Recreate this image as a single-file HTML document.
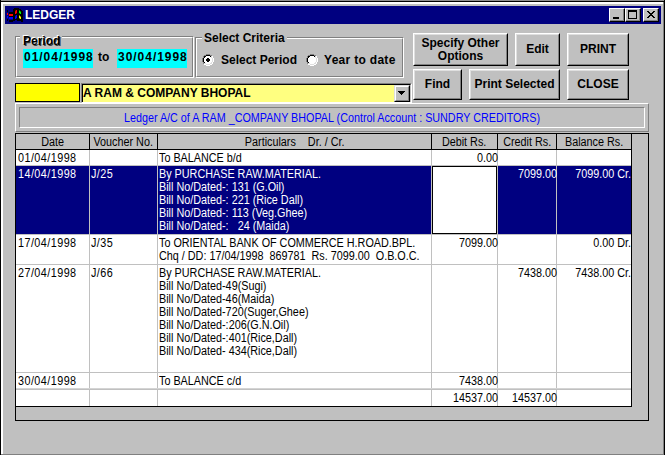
<!DOCTYPE html>
<html><head><meta charset="utf-8">
<style>
*{margin:0;padding:0;box-sizing:border-box}
html,body{width:665px;height:455px;overflow:hidden;background:#c0c0c0;font-family:"Liberation Sans",sans-serif;position:relative}
.a{position:absolute}
.hl{position:absolute;height:1px}
.vl{position:absolute;width:1px}
.btn{position:absolute;background:#c0c0c0;border-top:1px solid #fff;border-left:1px solid #fff;border-right:1px solid #000;border-bottom:1px solid #000;font-weight:bold;font-size:12px;color:#000;text-align:center;display:flex;align-items:center;justify-content:center;line-height:13px}
.btn::after{content:"";position:absolute;left:0;top:0;right:0;bottom:0;border-top:1px solid #dfdfdf;border-left:1px solid #dfdfdf;border-right:1px solid #808080;border-bottom:1px solid #808080}
.tb{position:absolute;top:8px;width:16px;height:14px;background:#c0c0c0;border-top:1px solid #fff;border-left:1px solid #fff;border-right:1px solid #000;border-bottom:1px solid #000}
.tb::after{content:"";position:absolute;left:0;top:0;right:0;bottom:0;border-right:1px solid #808080;border-bottom:1px solid #808080}
.grp{position:absolute;border-top:1px solid #808080;border-left:1px solid #808080;border-right:1px solid #fff;border-bottom:1px solid #fff}
.grp::after{content:"";position:absolute;left:0;top:0;right:0;bottom:0;border-top:1px solid #fff;border-left:1px solid #fff;border-right:1px solid #808080;border-bottom:1px solid #808080}
.lbl{position:absolute;font-weight:bold;font-size:12px;line-height:14px;white-space:nowrap;background:#c0c0c0;padding:0 2px}
.t11{font-size:11px;line-height:13px;white-space:nowrap}
.cell{position:absolute;font-size:12px;line-height:13px;white-space:pre;color:#000;transform:scaleX(0.9)}
.r{text-align:right}
.sel{color:#fff}
.radio{position:absolute;width:12px;height:12px}
</style></head><body>
<!-- window frame -->
<div class="hl" style="left:0;top:0;width:665px;background:#8e8e8e"></div>
<div class="hl" style="left:0;top:1px;width:665px;background:#000"></div>
<div class="vl" style="left:0;top:0;height:455px;background:#000"></div>
<div class="a" style="left:1px;top:2px;width:662px;height:2px;background:#fff"></div>
<div class="a" style="left:1px;top:2px;width:2px;height:453px;background:#fff"></div>
<div class="a" style="left:663px;top:2px;width:1px;height:453px;background:#808080"></div>
<div class="a" style="left:664px;top:0;width:1px;height:455px;background:#000"></div>
<div class="hl" style="left:1px;top:454px;width:663px;background:#808080"></div>

<!-- title bar -->
<div class="a" style="left:5px;top:6px;width:656px;height:18px;background:#000080"></div>
<svg class="a" style="left:6px;top:7px" width="17" height="16" viewBox="0 0 17 16">
<path fill="#000" d="M3 5h4v-3h1v-1h5v1h2v1h1v1h1v11h-2v-1h-4v-1h-2v1h-2v1h-4z"/>
<rect x="1" y="3" width="1" height="2" fill="#000"/>
<rect x="1" y="6" width="1" height="2" fill="#f00"/>
<rect x="1" y="9" width="1" height="2" fill="#00f"/>
<rect x="1" y="12" width="1" height="2" fill="#000"/>
<rect x="3" y="7" width="4" height="2" fill="#f00"/>
<rect x="3" y="10" width="4" height="2.5" fill="#00f"/>
<polygon points="10,3 11,3 11,5.5 10,7 9,7 9,4.5" fill="#f00"/>
<polygon points="13,3 14,4 15,5 15,7 14,7 13,5.5" fill="#0f0"/>
<polygon points="10,8 11,8 11,10.5 10,12 9,12 9,9.5" fill="#00f"/>
<polygon points="13,8 14,9 15,10 15,12 14,12 13,10.5" fill="#ff0"/>
</svg>
<div class="a" style="left:25px;top:8px;font-weight:bold;font-size:12px;line-height:14px;color:#fff;letter-spacing:0px">LEDGER</div>
<div class="tb" style="left:609px"><div class="a" style="left:3px;top:8px;width:6px;height:2px;background:#000"></div></div>
<div class="tb" style="left:625px"><div class="a" style="left:2px;top:1px;width:9px;height:9px;border:1px solid #000;border-top-width:2px"></div></div>
<div class="tb" style="left:643px"><svg class="a" style="left:3px;top:2px" width="8" height="7" viewBox="0 0 8 7" shape-rendering="crispEdges"><path fill="#000" d="M0 0h2v1h1v1h2v-1h1v-1h2v1h-1v1h-1v1h-1v1h1v1h1v1h1v1h-2v-1h-1v-1h-2v1h-1v1h-2v-1h1v-1h1v-1h1v-1h-1v-1h-1v-1h-1z"/></svg></div>

<!-- Period group -->
<div class="grp" style="left:15px;top:36px;width:179px;height:42px"></div>
<div class="lbl" style="left:20px;padding-left:3px;top:34px;text-shadow:-1px -1px 0 #fff,1px 1px 0 #404040">Period</div>
<div class="a" style="left:23px;top:49px;width:70px;height:19px;background:#00ffff"></div>
<div class="a" style="left:117px;top:49px;width:70px;height:19px;background:#00ffff"></div>
<div class="a" style="left:24px;top:50px;font-weight:bold;font-size:12px;line-height:14px;letter-spacing:0.97px">01/04/1998</div>
<div class="a" style="left:98px;top:50px;font-weight:bold;font-size:12px;line-height:14px">to</div>
<div class="a" style="left:118px;top:50px;font-weight:bold;font-size:12px;line-height:14px;letter-spacing:0.97px">30/04/1998</div>

<!-- Select Criteria group -->
<div class="grp" style="left:195px;top:37px;width:209px;height:41px"></div>
<div class="lbl" style="left:202px;top:31px">Select Criteria</div>
<svg class="radio" style="left:202px;top:54px" width="12" height="12" viewBox="0 0 12 12" shape-rendering="crispEdges"><path fill="#808080" d="M4 0h1v1h-1zM5 0h1v1h-1zM6 0h1v1h-1zM7 0h1v1h-1zM2 1h1v1h-1zM3 1h1v1h-1zM8 1h1v1h-1zM9 1h1v1h-1zM1 2h1v1h-1zM1 3h1v1h-1zM0 4h1v1h-1zM0 5h1v1h-1zM0 6h1v1h-1zM0 7h1v1h-1zM1 8h1v1h-1zM1 9h1v1h-1z"/><path fill="#fff" d="M10 2h1v1h-1zM10 3h1v1h-1zM11 4h1v1h-1zM11 5h1v1h-1zM11 6h1v1h-1zM11 7h1v1h-1zM10 8h1v1h-1zM10 9h1v1h-1zM2 10h1v1h-1zM3 10h1v1h-1zM8 10h1v1h-1zM9 10h1v1h-1zM4 11h1v1h-1zM5 11h1v1h-1zM6 11h1v1h-1zM7 11h1v1h-1zM4 2h1v1h-1zM5 2h1v1h-1zM6 2h1v1h-1zM7 2h1v1h-1zM3 3h1v1h-1zM4 3h1v1h-1zM5 3h1v1h-1zM6 3h1v1h-1zM7 3h1v1h-1zM8 3h1v1h-1zM2 4h1v1h-1zM3 4h1v1h-1zM4 4h1v1h-1zM5 4h1v1h-1zM6 4h1v1h-1zM7 4h1v1h-1zM8 4h1v1h-1zM9 4h1v1h-1zM2 5h1v1h-1zM3 5h1v1h-1zM4 5h1v1h-1zM5 5h1v1h-1zM6 5h1v1h-1zM7 5h1v1h-1zM8 5h1v1h-1zM9 5h1v1h-1zM2 6h1v1h-1zM3 6h1v1h-1zM4 6h1v1h-1zM5 6h1v1h-1zM6 6h1v1h-1zM7 6h1v1h-1zM8 6h1v1h-1zM9 6h1v1h-1zM2 7h1v1h-1zM3 7h1v1h-1zM4 7h1v1h-1zM5 7h1v1h-1zM6 7h1v1h-1zM7 7h1v1h-1zM8 7h1v1h-1zM9 7h1v1h-1zM3 8h1v1h-1zM4 8h1v1h-1zM5 8h1v1h-1zM6 8h1v1h-1zM7 8h1v1h-1zM8 8h1v1h-1zM4 9h1v1h-1zM5 9h1v1h-1zM6 9h1v1h-1zM7 9h1v1h-1z"/><path fill="#dfdfdf" d="M9 2h1v1h-1zM9 3h1v1h-1zM10 4h1v1h-1zM10 5h1v1h-1zM10 6h1v1h-1zM10 7h1v1h-1zM9 8h1v1h-1zM2 9h1v1h-1zM3 9h1v1h-1zM8 9h1v1h-1zM9 9h1v1h-1zM4 10h1v1h-1zM5 10h1v1h-1zM6 10h1v1h-1zM7 10h1v1h-1z"/><path fill="#000" d="M4 1h1v1h-1zM5 1h1v1h-1zM6 1h1v1h-1zM7 1h1v1h-1zM2 2h1v1h-1zM3 2h1v1h-1zM8 2h1v1h-1zM2 3h1v1h-1zM1 4h1v1h-1zM1 5h1v1h-1zM1 6h1v1h-1zM1 7h1v1h-1zM2 8h1v1h-1zM5 4h1v1h-1zM6 4h1v1h-1zM4 5h1v1h-1zM5 5h1v1h-1zM6 5h1v1h-1zM7 5h1v1h-1zM4 6h1v1h-1zM5 6h1v1h-1zM6 6h1v1h-1zM7 6h1v1h-1zM5 7h1v1h-1zM6 7h1v1h-1z"/></svg>
<div class="a" style="left:221px;top:53px;font-weight:bold;font-size:12px;line-height:14px">Select Period</div>
<svg class="radio" style="left:306px;top:54px" width="12" height="12" viewBox="0 0 12 12" shape-rendering="crispEdges"><path fill="#808080" d="M4 0h1v1h-1zM5 0h1v1h-1zM6 0h1v1h-1zM7 0h1v1h-1zM2 1h1v1h-1zM3 1h1v1h-1zM8 1h1v1h-1zM9 1h1v1h-1zM1 2h1v1h-1zM1 3h1v1h-1zM0 4h1v1h-1zM0 5h1v1h-1zM0 6h1v1h-1zM0 7h1v1h-1zM1 8h1v1h-1zM1 9h1v1h-1z"/><path fill="#fff" d="M10 2h1v1h-1zM10 3h1v1h-1zM11 4h1v1h-1zM11 5h1v1h-1zM11 6h1v1h-1zM11 7h1v1h-1zM10 8h1v1h-1zM10 9h1v1h-1zM2 10h1v1h-1zM3 10h1v1h-1zM8 10h1v1h-1zM9 10h1v1h-1zM4 11h1v1h-1zM5 11h1v1h-1zM6 11h1v1h-1zM7 11h1v1h-1zM4 2h1v1h-1zM5 2h1v1h-1zM6 2h1v1h-1zM7 2h1v1h-1zM3 3h1v1h-1zM4 3h1v1h-1zM5 3h1v1h-1zM6 3h1v1h-1zM7 3h1v1h-1zM8 3h1v1h-1zM2 4h1v1h-1zM3 4h1v1h-1zM4 4h1v1h-1zM5 4h1v1h-1zM6 4h1v1h-1zM7 4h1v1h-1zM8 4h1v1h-1zM9 4h1v1h-1zM2 5h1v1h-1zM3 5h1v1h-1zM4 5h1v1h-1zM5 5h1v1h-1zM6 5h1v1h-1zM7 5h1v1h-1zM8 5h1v1h-1zM9 5h1v1h-1zM2 6h1v1h-1zM3 6h1v1h-1zM4 6h1v1h-1zM5 6h1v1h-1zM6 6h1v1h-1zM7 6h1v1h-1zM8 6h1v1h-1zM9 6h1v1h-1zM2 7h1v1h-1zM3 7h1v1h-1zM4 7h1v1h-1zM5 7h1v1h-1zM6 7h1v1h-1zM7 7h1v1h-1zM8 7h1v1h-1zM9 7h1v1h-1zM3 8h1v1h-1zM4 8h1v1h-1zM5 8h1v1h-1zM6 8h1v1h-1zM7 8h1v1h-1zM8 8h1v1h-1zM4 9h1v1h-1zM5 9h1v1h-1zM6 9h1v1h-1zM7 9h1v1h-1z"/><path fill="#dfdfdf" d="M9 2h1v1h-1zM9 3h1v1h-1zM10 4h1v1h-1zM10 5h1v1h-1zM10 6h1v1h-1zM10 7h1v1h-1zM9 8h1v1h-1zM2 9h1v1h-1zM3 9h1v1h-1zM8 9h1v1h-1zM9 9h1v1h-1zM4 10h1v1h-1zM5 10h1v1h-1zM6 10h1v1h-1zM7 10h1v1h-1z"/><path fill="#000" d="M4 1h1v1h-1zM5 1h1v1h-1zM6 1h1v1h-1zM7 1h1v1h-1zM2 2h1v1h-1zM3 2h1v1h-1zM8 2h1v1h-1zM2 3h1v1h-1zM1 4h1v1h-1zM1 5h1v1h-1zM1 6h1v1h-1zM1 7h1v1h-1zM2 8h1v1h-1z"/></svg>
<div class="a" style="left:324px;top:53px;letter-spacing:0.3px;font-weight:bold;font-size:12px;line-height:14px">Year to date</div>

<!-- Buttons -->
<div class="btn" style="left:413px;top:33px;width:95px;height:33px">Specify Other<br>Options</div>
<div class="btn" style="left:515px;top:33px;width:45px;height:33px">Edit</div>
<div class="btn" style="left:567px;top:33px;width:62px;height:33px">PRINT</div>
<div class="btn" style="left:413px;top:69px;width:49px;height:31px">Find</div>
<div class="btn" style="left:469px;top:69px;width:91px;height:31px">Print Selected</div>
<div class="btn" style="left:567px;top:69px;width:62px;height:31px">CLOSE</div>

<!-- yellow box + combo -->
<div class="a" style="left:15px;top:83px;width:65px;height:19px;background:#ffff00;border:1px solid #000"></div>
<div class="a" style="left:81px;top:83px;width:331px;height:20px;background:#ffff80;border-top:1px solid #808080;border-left:1px solid #808080;border-right:1px solid #fff;border-bottom:1px solid #fff">
  <div class="a" style="left:0;top:0;right:0;bottom:0;border-top:1px solid #000;border-left:1px solid #000;border-right:1px solid #c0c0c0"></div>
  <div class="a" style="left:1px;top:2px;font-weight:bold;font-size:12px;line-height:14px">A RAM &amp; COMPANY BHOPAL</div>
  <div class="a" style="left:312px;top:1px;width:16px;height:17px;background:#c0c0c0;border-top:1px solid #dfdfdf;border-left:1px solid #dfdfdf;border-right:1px solid #000;border-bottom:1px solid #000">
    <div class="a" style="left:0;top:0;right:0;bottom:0;border-top:1px solid #fff;border-left:1px solid #fff;border-right:1px solid #808080;border-bottom:1px solid #808080"></div>
    <svg class="a" style="left:3px;top:5px" width="7" height="4" viewBox="0 0 7 4" shape-rendering="crispEdges"><path fill="#000" d="M0 0h7v1h-1v1h-1v1h-1v1h-1v-1h-1v-1h-1v-1h-1z"/></svg>
  </div>
</div>

<!-- Ledger panel -->
<div class="a" style="left:15px;top:103px;width:634px;height:29px;border-top:1px solid #fff;border-left:1px solid #fff;border-right:1px solid #808080;border-bottom:1px solid #808080"></div>
<div class="a" style="left:19px;top:107px;width:626px;height:21px;border-top:1px solid #808080;border-left:1px solid #808080;border-right:1px solid #fff;border-bottom:1px solid #fff"></div>
<div class="a" style="left:19px;top:112px;width:626px;text-align:center;color:#0000ff;font-size:12px;line-height:13px;white-space:nowrap;transform:scaleX(0.897);transform-origin:50% 0">Ledger A/C of A RAM _COMPANY BHOPAL (Control Account : SUNDRY CREDITORS)</div>

<!-- Grid -->
<div class="a" style="left:15px;top:133px;width:634px;height:288px;border:1px solid #000;background:#c0c0c0"></div>
<div id="gridwrap">
<div class="a" style="left:16px;top:149px;width:616px;height:1px;background:#000;"></div>
<div class="a" style="left:89px;top:134px;width:1px;height:15px;background:#000;"></div>
<div class="a" style="left:157px;top:134px;width:1px;height:15px;background:#000;"></div>
<div class="a" style="left:431px;top:134px;width:1px;height:15px;background:#000;"></div>
<div class="a" style="left:497px;top:134px;width:1px;height:15px;background:#000;"></div>
<div class="a" style="left:556px;top:134px;width:1px;height:15px;background:#000;"></div>
<div class="a" style="left:631px;top:134px;width:1px;height:15px;background:#000;"></div>
<div class="a" style="left:16px;top:150px;width:615px;height:256px;background:#fff;"></div>
<div class="a" style="left:16px;top:166px;width:615px;height:68px;background:#000080;"></div>
<div class="a" style="left:89px;top:150px;width:1px;height:256px;background:#c0c0c0;"></div>
<div class="a" style="left:157px;top:150px;width:1px;height:256px;background:#c0c0c0;"></div>
<div class="a" style="left:431px;top:150px;width:1px;height:256px;background:#c0c0c0;"></div>
<div class="a" style="left:497px;top:150px;width:1px;height:256px;background:#c0c0c0;"></div>
<div class="a" style="left:556px;top:150px;width:1px;height:256px;background:#c0c0c0;"></div>
<div class="a" style="left:16px;top:165px;width:615px;height:1px;background:#c0c0c0;"></div>
<div class="a" style="left:16px;top:234px;width:615px;height:1px;background:#c0c0c0;"></div>
<div class="a" style="left:16px;top:264px;width:615px;height:1px;background:#c0c0c0;"></div>
<div class="a" style="left:16px;top:372px;width:615px;height:1px;background:#c0c0c0;"></div>
<div class="a" style="left:16px;top:389px;width:615px;height:1px;background:#c0c0c0;"></div>
<div class="a" style="left:16px;top:388px;width:615px;height:1px;background:#d4d4d4;"></div>
<div class="a" style="left:631px;top:134px;width:1px;height:273px;background:#000;"></div>
<div class="a" style="left:16px;top:406px;width:616px;height:1px;background:#000;"></div>
<div class="a" style="left:432px;top:166px;width:65px;height:68px;background:#fff;border:1px solid #000"></div>
<div class="cell" style="left:11.94px;top:136.0px;width:81.11px;text-align:center;transform-origin:50% 0">Date</div>
<div class="cell" style="left:86.28px;top:136.0px;width:74.44px;text-align:center;transform-origin:50% 0">Voucher No.</div>
<div class="cell" style="left:142.83px;top:136.0px;width:303.33px;text-align:center;transform-origin:50% 0">Particulars    Dr. / Cr.</div>
<div class="cell" style="left:428.39px;top:136.0px;width:72.22px;text-align:center;transform-origin:50% 0">Debit Rs.</div>
<div class="cell" style="left:494.78px;top:136.0px;width:64.44px;text-align:center;transform-origin:50% 0">Credit Rs.</div>
<div class="cell" style="left:552.89px;top:136.0px;width:82.22px;text-align:center;transform-origin:50% 0">Balance Rs.</div>
<div class="cell" style="left:18px;top:152.0px;width:400px;color:#000;transform-origin:0 0;letter-spacing:0.5px">01/04/1998</div>
<div class="cell" style="left:159px;top:152.0px;width:400px;color:#000;transform-origin:0 0">To BALANCE b/d</div>
<div class="cell r" style="left:378.00px;top:152.0px;width:120px;color:#000;transform-origin:100% 0">0.00</div>
<div class="cell" style="left:18px;top:168.0px;width:400px;color:#fff;transform-origin:0 0;letter-spacing:0.5px">14/04/1998</div>
<div class="cell" style="left:91px;top:168.0px;width:400px;color:#fff;transform-origin:0 0;letter-spacing:0.5px">J/25</div>
<div class="cell" style="left:159px;top:168.0px;width:400px;color:#fff;transform-origin:0 0">By PURCHASE RAW.MATERIAL.
Bill No/Dated-: 131 (G.Oil)
Bill No/Dated-: 221 (Rice Dall)
Bill No/Dated-: 113 (Veg.Ghee)
Bill No/Dated-:   24 (Maida)</div>
<div class="cell r" style="left:436.50px;top:168.0px;width:120px;color:#fff;transform-origin:100% 0">7099.00</div>
<div class="cell r" style="left:510.50px;top:168.0px;width:120px;color:#fff;transform-origin:100% 0">7099.00 Cr.</div>
<div class="cell" style="left:18px;top:237.0px;width:400px;color:#000;transform-origin:0 0;letter-spacing:0.5px">17/04/1998</div>
<div class="cell" style="left:91px;top:237.0px;width:400px;color:#000;transform-origin:0 0;letter-spacing:0.5px">J/35</div>
<div class="cell" style="left:159px;top:237.0px;width:400px;color:#000;transform-origin:0 0">To ORIENTAL BANK OF COMMERCE H.ROAD.BPL.
Chq / DD: 17/04/1998  869781  Rs. 7099.00  O.B.O.C.</div>
<div class="cell r" style="left:378.00px;top:237.0px;width:120px;color:#000;transform-origin:100% 0">7099.00</div>
<div class="cell r" style="left:510.50px;top:237.0px;width:120px;color:#000;transform-origin:100% 0">0.00 Dr.</div>
<div class="cell" style="left:18px;top:267.0px;width:400px;color:#000;transform-origin:0 0;letter-spacing:0.5px">27/04/1998</div>
<div class="cell" style="left:91px;top:267.0px;width:400px;color:#000;transform-origin:0 0;letter-spacing:0.5px">J/66</div>
<div class="cell" style="left:159px;top:267.0px;width:400px;color:#000;transform-origin:0 0">By PURCHASE RAW.MATERIAL.
Bill No/Dated-49(Sugi)
Bill No/Dated-46(Maida)
Bill No/Dated-720(Suger,Ghee)
Bill No/Dated-:206(G.N.Oil)
Bill No/Dated-:401(Rice,Dall)
Bill No/Dated- 434(Rice,Dall)</div>
<div class="cell r" style="left:436.50px;top:267.0px;width:120px;color:#000;transform-origin:100% 0">7438.00</div>
<div class="cell r" style="left:510.50px;top:267.0px;width:120px;color:#000;transform-origin:100% 0">7438.00 Cr.</div>
<div class="cell" style="left:18px;top:375.0px;width:400px;color:#000;transform-origin:0 0;letter-spacing:0.5px">30/04/1998</div>
<div class="cell" style="left:159px;top:375.0px;width:400px;color:#000;transform-origin:0 0">To BALANCE c/d</div>
<div class="cell r" style="left:378.00px;top:375.0px;width:120px;color:#000;transform-origin:100% 0">7438.00</div>
<div class="cell r" style="left:378.00px;top:392.0px;width:120px;color:#000;transform-origin:100% 0">14537.00</div>
<div class="cell r" style="left:436.50px;top:392.0px;width:120px;color:#000;transform-origin:100% 0">14537.00</div>
</div>
</body></html>
